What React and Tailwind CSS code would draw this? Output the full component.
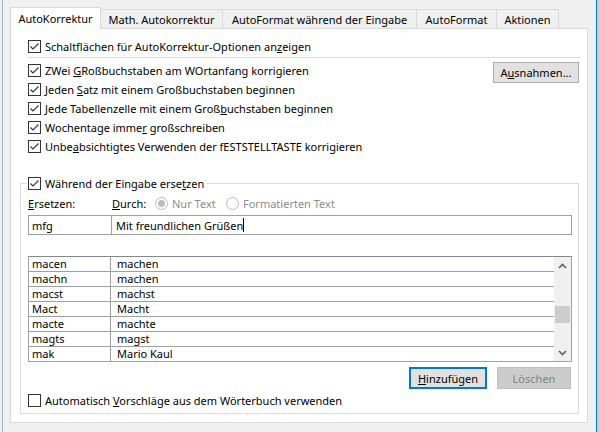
import React from "react";

const font = { fontFamily: '"Noto Sans", "Segoe UI", sans-serif' };

function Check({ checked }) {
  return (
    <span className="w-[13px] h-[13px] border border-[#333333] bg-white flex items-center justify-center shrink-0">
      {checked && (
        <svg width="11" height="11" viewBox="0 0 11 11">
          <path d="M1.5 5.5 L4 8 L9.5 2.5" fill="none" stroke="#333333" strokeWidth="1.1" />
        </svg>
      )}
    </span>
  );
}

function Row({ checked = true, children }) {
  return (
    <div className="h-[19px] flex items-center gap-[4px]">
      <Check checked={checked} />
      <span className="whitespace-nowrap">{children}</span>
    </div>
  );
}

function Radio({ selected }) {
  return (
    <span className="w-[13px] h-[13px] rounded-full border border-[#bcbcbc] bg-white flex items-center justify-center shrink-0">
      {selected && <span className="w-[7px] h-[7px] rounded-full bg-[#bcbcbc]" />}
    </span>
  );
}

const tabs = [
  { label: "Math. Autokorrektur", w: "w-[122px]" },
  { label: "AutoFormat während der Eingabe", w: "w-[194px]" },
  { label: "AutoFormat", w: "w-[80px]" },
  { label: "Aktionen", w: "w-[62px]" },
];

const entries = [
  ["macen", "machen"],
  ["machn", "machen"],
  ["macst", "machst"],
  ["Mact", "Macht"],
  ["macte", "machte"],
  ["magts", "magst"],
  ["mak", "Mario Kaul"],
];

export default function App() {
  return (
    <div className="w-[600px] h-[432px] bg-[#f0f0f0] flex text-[11px] leading-[15px] text-black overflow-hidden" style={font}>
      {/* left window edge */}
      <div className="w-[2px] shrink-0" />
      <div className="w-px shrink-0 bg-[#9fb3c8]" />
      <div className="w-[7px] shrink-0" />

      <div className="w-[578px] shrink-0 flex flex-col">
        {/* Tabs */}
        <div className="h-[28px] flex items-end">
          <div className="relative z-10 -mb-px w-[91px] h-[22px] bg-white border border-b-0 border-[#d9d9d9] flex items-center justify-center">
            AutoKorrektur
          </div>
          {tabs.map((t) => (
            <div
              key={t.label}
              className={`${t.w} h-[19px] border-t border-r border-[#d9d9d9] flex items-center justify-center whitespace-nowrap`}
            >
              {t.label}
            </div>
          ))}
        </div>

        {/* Panel */}
        <div className="bg-white border border-[#d9d9d9] pt-[8px] pl-[17px] pr-[6px] pb-[8px]">
          <Row>
            Schaltflächen für AutoKorrektur-Optionen an<u>z</u>eigen
          </Row>
          <div className="h-px bg-[#dcdcdc] mt-px mb-[3px]" />

          <div className="flex justify-between">
            <div>
              <Row>
                ZWei <u>G</u>Roßbuchstaben am WOrtanfang korrigieren
              </Row>
              <Row>
                Jeden <u>S</u>atz mit einem Großbuchstaben beginnen
              </Row>
              <Row>
                Jede Tabellenzelle mit einem Groß<u>b</u>uchstaben beginnen
              </Row>
              <Row>
                Wochentage imme<u>r</u> großschreiben
              </Row>
              <Row>
                Unbe<u>a</u>bsichtigtes Verwenden der fESTSTELLTASTE korrigieren
              </Row>
            </div>
            <button className="mt-px mr-[2px] w-[86px] h-[21px] bg-[#e1e1e1] border border-[#adadad] flex items-center justify-center">
              A<u>u</u>snahmen...
            </button>
          </div>

          {/* Group box */}
          <div className="mt-[27px] -ml-[8px] mr-[2px] border border-[#dcdcdc] pl-[7px] pr-[6px] pb-[3px]">
            <div className="-mt-[10px] -ml-[2px] w-fit bg-white px-[2px]">
              <Row>
                Während der Eingabe erse<u>t</u>zen
              </Row>
            </div>
            <div className="h-[20px] flex items-center">
              <span className="w-[84px]">
                <u>E</u>rsetzen:
              </span>
              <span className="w-[43px]">
                <u>D</u>urch:
              </span>
              <span className="flex items-center gap-[4px] text-[#8c8c8c] w-[71px]">
                <Radio selected />
                Nur Text
              </span>
              <span className="flex items-center gap-[4px] text-[#8c8c8c]">
                <Radio />
                Formatierten Text
              </span>
            </div>

            <div className="mt-[2px] flex h-[20px]">
              <div className="w-[84px] border border-[#a0a0a0] pl-[3px] flex items-center">mfg</div>
              <div className="flex-1 border border-l-0 border-[#a0a0a0] pl-[4px] flex items-center">
                Mit freundlichen Grüßen
                <span className="w-px h-[14px] bg-black" />
              </div>
            </div>

            {/* Table */}
            <div className="mt-[21px] h-[106px] border border-[#a0a0a0] border-t-[#828790] flex overflow-hidden">
              <div className="flex-1">
                {entries.map(([a, b]) => (
                  <div key={a} className="h-[15px] flex border-b border-[#a0a0a0] leading-[14px]">
                    <div className="w-[82px] border-r border-[#a0a0a0] pl-[3px]">{a}</div>
                    <div className="pl-[6px]">{b}</div>
                  </div>
                ))}
              </div>
              <div className="w-[17px] bg-[#f0f0f0] flex flex-col items-center">
                <div className="h-[17px] flex items-center justify-center">
                  <svg width="9" height="6" viewBox="0 0 9 6">
                    <path d="M1 5 L4.5 1.5 L8 5" fill="none" stroke="#606060" strokeWidth="1.6" />
                  </svg>
                </div>
                <div className="mt-[32px] w-[15px] h-[17px] bg-[#cdcdcd]" />
                <div className="flex-1" />
                <div className="h-[17px] flex items-center justify-center">
                  <svg width="9" height="6" viewBox="0 0 9 6">
                    <path d="M1 1 L4.5 4.5 L8 1" fill="none" stroke="#606060" strokeWidth="1.6" />
                  </svg>
                </div>
              </div>
            </div>

            <div className="mt-[5px] flex justify-end gap-[10px] pr-px">
              <button className="w-[78px] h-[22px] bg-[#e1e1e1] border-2 border-[#0078d7] flex items-center justify-center">
                <span>
                  <u>H</u>inzufügen
                </span>
              </button>
              <button className="w-[74px] h-[22px] bg-[#cccccc] border border-[#bfbfbf] text-[#838383] flex items-center justify-center">
                Löschen
              </button>
            </div>

            <div className="mt-[2px]">
              <Row checked={false}>
                Automatisch <u>V</u>orschläge aus dem Wörterbuch verwenden
              </Row>
            </div>
          </div>
        </div>
      </div>

      {/* right window edge */}
      <div className="w-[8px] shrink-0" />
      <div className="w-px shrink-0 bg-[#0078d7]" />
      <div className="flex-1 bg-[#d0d0d0]" />
    </div>
  );
}
